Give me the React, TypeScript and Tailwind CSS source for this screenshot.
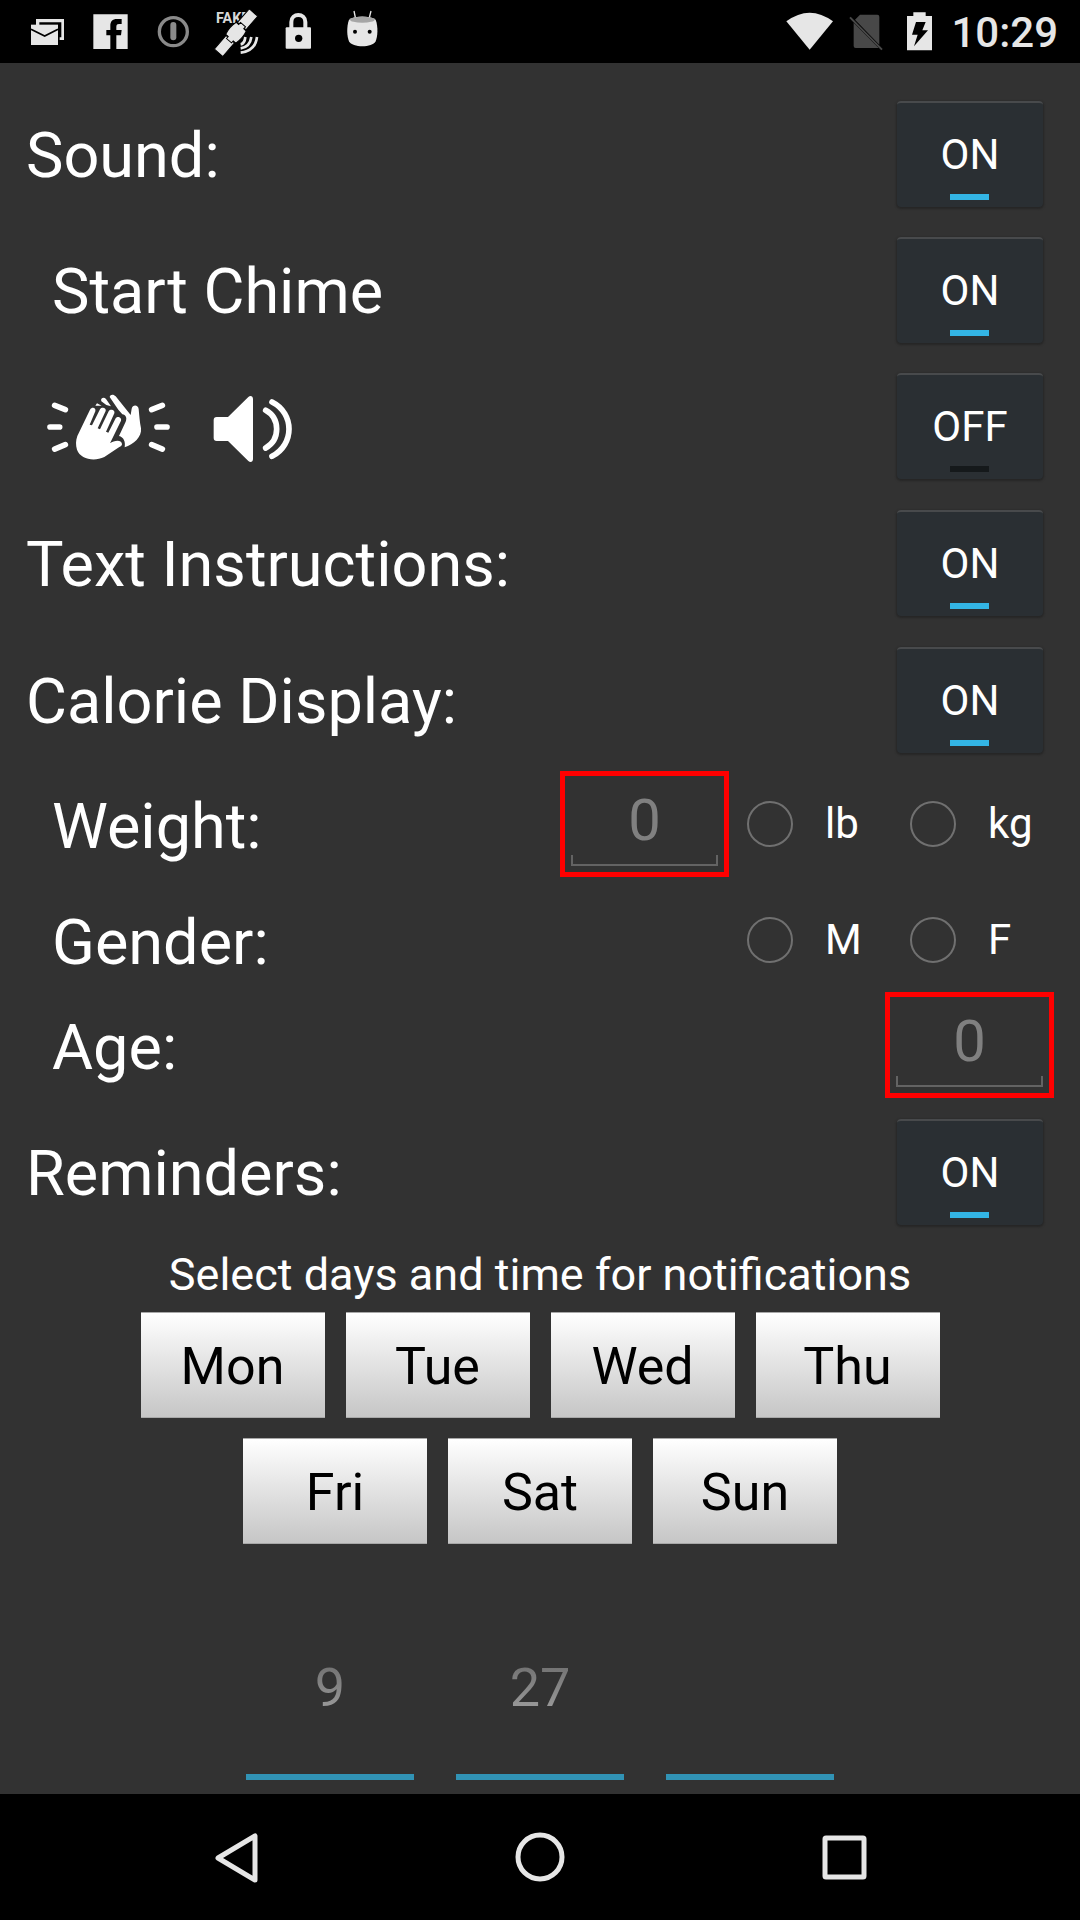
import React, { useState } from "react";

function StatusIcon({ index, label, children }: { index: number; label: string; children: React.ReactNode }) {
  return (
    <svg viewBox={`${48 + 189 * index} 0 189 192`} className="h-16 w-[63px] shrink-0" role="img" aria-label={label}>
      {children}
    </svg>
  );
}

function StatusBar() {
  return (
    <header className="flex h-[63px] items-start justify-between bg-black pr-[22px] pl-4 text-[#e6e6e6]">
      <div className="flex">
        <StatusIcon index={0} label="Mail">
          <path d="M108 57h84v63h-13v-8h5V67h-66v8h-10z" fill="#e6e6e6" />
          <path d="M93 74h81v61H93z" fill="#e6e6e6" />
          <path d="M93 88l41 20 40-20" fill="none" stroke="#000" strokeWidth="5" />
        </StatusIcon>
        <StatusIcon index={1} label="Facebook">
          <path d="M280 43h103v104h-34v-41h14l2-16h-16V80c0-6 3-8 8-8h8V57h-14c-14 0-20 8-20 20v13h-12v16h12v41h-51z" fill="#e6e6e6" />
        </StatusIcon>
        <StatusIcon index={2} label="Info">
          <circle cx="520" cy="95" r="42" fill="none" stroke="#8a8a8a" strokeWidth="10" />
          <path d="M520 75v37" stroke="#8a8a8a" strokeWidth="18" strokeLinecap="round" />
        </StatusIcon>
        <StatusIcon index={3} label="Fake GPS">
          <text x="648" y="69" fontSize="43" fontWeight="700" fill="#d8d8d8" fontFamily="Roboto, sans-serif">FAKE</text>
          <g transform="rotate(-49 708 98)" fill="#e6e6e6" stroke="#000" strokeWidth="3">
            <rect x="628" y="81" width="54" height="34" rx="3" />
            <rect x="734" y="81" width="54" height="34" rx="3" />
            <path d="M676 88h8v-10q24-7 48 0v10h8v20h-8v10q-24 7-48 0v-10h-8z" />
          </g>
          <g fill="none" stroke="#e6e6e6" strokeWidth="8">
            <path d="M722 133q12-2 14-22" />
            <path d="M722 145q28-4 32-34" />
            <path d="M722 158q44-5 49-47" />
          </g>
        </StatusIcon>
        <StatusIcon index={4} label="Locked">
          <path d="M874 84V66c0-28 42-28 42 0v18" fill="none" stroke="#e6e6e6" strokeWidth="12" />
          <rect x="857" y="82" width="76" height="64" rx="3" fill="#e6e6e6" />
          <circle cx="896" cy="115" r="11" fill="#000" />
        </StatusIcon>
        <StatusIcon index={5} label="Android">
          <path d="M1062 33l5 24M1113 33l-6 24" stroke="#e6e6e6" strokeWidth="4" />
          <path d="M1047 59c20-13 60-13 80 0 8 22 6 50 0 65-10 20-70 20-80 0-6-15-8-43 0-65z" fill="#e6e6e6" />
          <ellipse cx="1087" cy="59" rx="37" ry="9" fill="#a6a6a6" />
          <circle cx="1065" cy="95" r="6" fill="#000" />
          <circle cx="1109" cy="95" r="6" fill="#000" />
        </StatusIcon>
      </div>
      <div className="flex">
        <svg viewBox="81 0 144 192" className="mr-[14px] h-16 w-12" role="img" aria-label="Wi-Fi">
          <path d="M82 64q70-52 140 0l-70 85z" fill="#e6e6e6" />
        </svg>
        <svg viewBox="267 0 108 192" className="mr-[22px] h-16 w-9" role="img" aria-label="No SIM card">
          <path d="M303 44h52q6 0 6 6v84l-73-75zM284 68l75 76h-69q-6 0-6-6z" fill="#484848" />
          <path d="M273 52l96 97" stroke="#484848" strokeWidth="6" />
        </svg>
        <svg viewBox="441 0 81 192" className="mr-[18px] h-16 w-[27px]" role="img" aria-label="Battery charging">
          <path d="M463 37h37v11h19v103h-75V48h19z" fill="#e6e6e6" />
          <path d="M471 66h29l-10 25h17l-42 48 11-35h-17z" fill="#000" />
        </svg>
        <time className="pt-[5px] text-[42px] leading-[56px] font-medium">10:29</time>
      </div>
    </header>
  );
}

function Toggle({ labelledBy, initial }: { labelledBy: string; initial: boolean }) {
  const [on, setOn] = useState(initial);
  return (
    <button
      type="button"
      aria-pressed={on}
      aria-labelledby={labelledBy}
      onClick={() => setOn(!on)}
      className="relative h-[106px] w-[146px] shrink-0 rounded-[4px] border-t-2 border-[#484a4c] bg-[#2a2f33] text-[42px] leading-[50px] shadow-[0_1px_2px_1px_#262626]"
    >
      {on ? "ON" : "OFF"}
      <span className={`absolute bottom-[7px] left-[53px] h-[6px] w-[39px] ${on ? "bg-[#33b5e5]" : "bg-[#15191b]"}`} />
    </button>
  );
}

function ToggleRow({ id, initial = true, indent = false, children }: { id: string; initial?: boolean; indent?: boolean; children: React.ReactNode }) {
  return (
    <div className={`flex items-center justify-between pr-[37px] ${indent ? "pl-[52px]" : "pl-[26px]"}`}>
      <div id={id} className="flex items-center pt-1 text-[63px] leading-[74px]">{children}</div>
      <Toggle labelledBy={id} initial={initial} />
    </div>
  );
}

function ClapIcon() {
  return (
    <svg viewBox="129 93 390 210" className="h-[70px] w-[130px]" role="img" aria-label="Clapping">
      <g fill="none" stroke="#fff" strokeWidth="17" strokeLinecap="round">
        <path d="M164 130l32 13M150 195h29M164 261l32-13M487 130l-32 13M501 195h-30M487 261l-32-13" />
      </g>
      <path d="M329 105c2-9 12-9 18-2l45 56 3-19c3-14 20-12 21 1 2 20 3 38 7 58 3 26-22 48-49 57 3-18-3-30-17-34l20-43c5-12 0-20-10-22l-12-14z" fill="#fff" />
      <path d="M304 118c-4-10 8-14 14-7l15 22-14-4zM286 131l5-7 14 7z" fill="#fff" />
      <path d="M232 222l38-79c6-10 19-6 16 5l-17 40 7 2 24-48c6-9 20-4 17 5l-24 52 7 3 26-54c6-9 20-3 17 6l-25 55 7 3 22-43c6-9 19-2 16 7l-33 68c12-9 34-13 36 2 0 5-3 7-8 9l-45 30c-32 15-72 6-82-22-4-14-4-27 1-41z" fill="#fff" />
    </svg>
  );
}

function SpeakerIcon() {
  return (
    <svg viewBox="636 93 246 210" className="ml-[39px] h-[70px] w-[82px]" role="img" aria-label="Volume">
      <path d="M650 165h34l61-60c6-5 14-3 14 6v180c0 9-8 11-14 6l-61-60h-34c-6 0-9-3-9-9v-54c0-6 3-9 9-9z" fill="#fff" />
      <path d="M797 145c44 24 44 88 0 113M816 120c68 34 68 128 0 163" fill="none" stroke="#fff" strokeWidth="17" strokeLinecap="round" />
    </svg>
  );
}

function NumberField({ id }: { id: string }) {
  return (
    <div className="relative h-[106px] w-[169px] shrink-0 border-[5px] border-[#ff0000]">
      <input
        id={id}
        type="text"
        inputMode="numeric"
        placeholder="0"
        className="h-[88px] w-full bg-transparent text-center text-[58px] leading-[68px] outline-none placeholder:text-[#808080]"
      />
      <span className="absolute inset-x-[6px] bottom-[6px] h-[11px] border-x-2 border-b-2 border-[#636363]" />
    </div>
  );
}

function RadioPair({ name, label, options }: { name: string; label: string; options: string[] }) {
  return (
    <div role="radiogroup" aria-label={label} className="flex">
      {options.map((o) => (
        <label key={o} className="flex w-[163px] items-center gap-8 text-[42px] leading-[50px]">
          <input type="radio" name={name} className="size-[46px] shrink-0 appearance-none rounded-full border-2 border-[#707070] checked:bg-[#33b5e5]" />
          {o}
        </label>
      ))}
    </div>
  );
}

function DayButton({ day }: { day: string }) {
  const [picked, setPicked] = useState(false);
  return (
    <button
      type="button"
      aria-pressed={picked}
      onClick={() => setPicked(!picked)}
      className="h-[106px] w-[184px] border-y border-[#a8a8a8] bg-linear-to-b from-white to-[#c6c6c6] pt-1 text-[52px] leading-[60px] text-black"
    >
      {day}
    </button>
  );
}

function Spinner({ label, value }: { label: string; value: string }) {
  return (
    <input
      type="text"
      aria-label={label}
      defaultValue={value}
      className="h-[126px] w-[168px] border-b-[6px] border-[#3193b5] bg-linear-to-b from-[#686868] to-[#d8d8d8] bg-clip-text pb-[54px] text-center text-[54px] leading-[64px] text-transparent outline-none"
    />
  );
}

const fieldLabel = "grow pt-[6px] text-[63px] leading-[74px]";

export default function App() {
  return (
    <div className="flex min-h-screen flex-col bg-[#323232] font-[Roboto,sans-serif] text-white">
      <StatusBar />
      <main className="flex grow flex-col pt-[38px]">
        <section className="flex flex-col gap-[31px]">
          <div className="flex flex-col gap-[30px]">
            <ToggleRow id="sound">Sound:</ToggleRow>
            <ToggleRow id="chime" indent>Start Chime</ToggleRow>
            <div className="-ml-[9px]">
              <ToggleRow id="clap" indent initial={false}>
                <ClapIcon />
                <SpeakerIcon />
              </ToggleRow>
            </div>
          </div>
          <ToggleRow id="instructions">Text Instructions:</ToggleRow>
          <ToggleRow id="calories">Calorie Display:</ToggleRow>
        </section>
        <section className="flex flex-col pt-[18px] pl-[52px]">
          <div className="flex items-center pr-[7px]">
            <label htmlFor="weight" className={fieldLabel}>Weight:</label>
            <NumberField id="weight" />
            <div className="pl-[18px]">
              <RadioPair name="unit" label="Weight unit" options={["lb", "kg"]} />
            </div>
          </div>
          <div className="flex items-center pt-[23px] pr-[7px] pb-3">
            <span className={fieldLabel}>Gender:</span>
            <RadioPair name="gender" label="Gender" options={["M", "F"]} />
          </div>
          <div className="flex items-center pr-[26px]">
            <label htmlFor="age" className={fieldLabel}>Age:</label>
            <NumberField id="age" />
          </div>
        </section>
        <section className="flex flex-col pt-[21px]">
          <ToggleRow id="reminders">Reminders:</ToggleRow>
          <p className="pt-[22px] text-center text-[45px] leading-[56px]">Select days and time for notifications</p>
          <div className="flex justify-center gap-[21px] pt-[9px]">
            {["Mon", "Tue", "Wed", "Thu"].map((d) => <DayButton key={d} day={d} />)}
          </div>
          <div className="flex justify-center gap-[21px] pt-5">
            {["Fri", "Sat", "Sun"].map((d) => <DayButton key={d} day={d} />)}
          </div>
        </section>
        <div className="mt-auto flex justify-center gap-[42px] pb-[14px]">
          <Spinner label="Hour" value="9" />
          <Spinner label="Minute" value="27" />
          <Spinner label="Period" value="" />
        </div>
      </main>
      <nav className="flex h-[126px] items-center justify-center gap-[240px] bg-black">
        <button type="button" aria-label="Back">
          <svg viewBox="0 0 64 64" className="size-16" fill="none" stroke="#e6e6e6" strokeWidth="5" strokeLinejoin="round">
            <path d="M51 11v44L14 33z" />
          </svg>
        </button>
        <button type="button" aria-label="Home">
          <svg viewBox="0 0 64 64" className="size-16" fill="none" stroke="#e6e6e6" strokeWidth="5">
            <circle cx="32" cy="32" r="22" />
          </svg>
        </button>
        <button type="button" aria-label="Overview">
          <svg viewBox="0 0 64 64" className="size-16" fill="none" stroke="#e6e6e6" strokeWidth="5" strokeLinejoin="round">
            <rect x="13" y="13" width="39" height="39" rx="1" />
          </svg>
        </button>
      </nav>
    </div>
  );
}
